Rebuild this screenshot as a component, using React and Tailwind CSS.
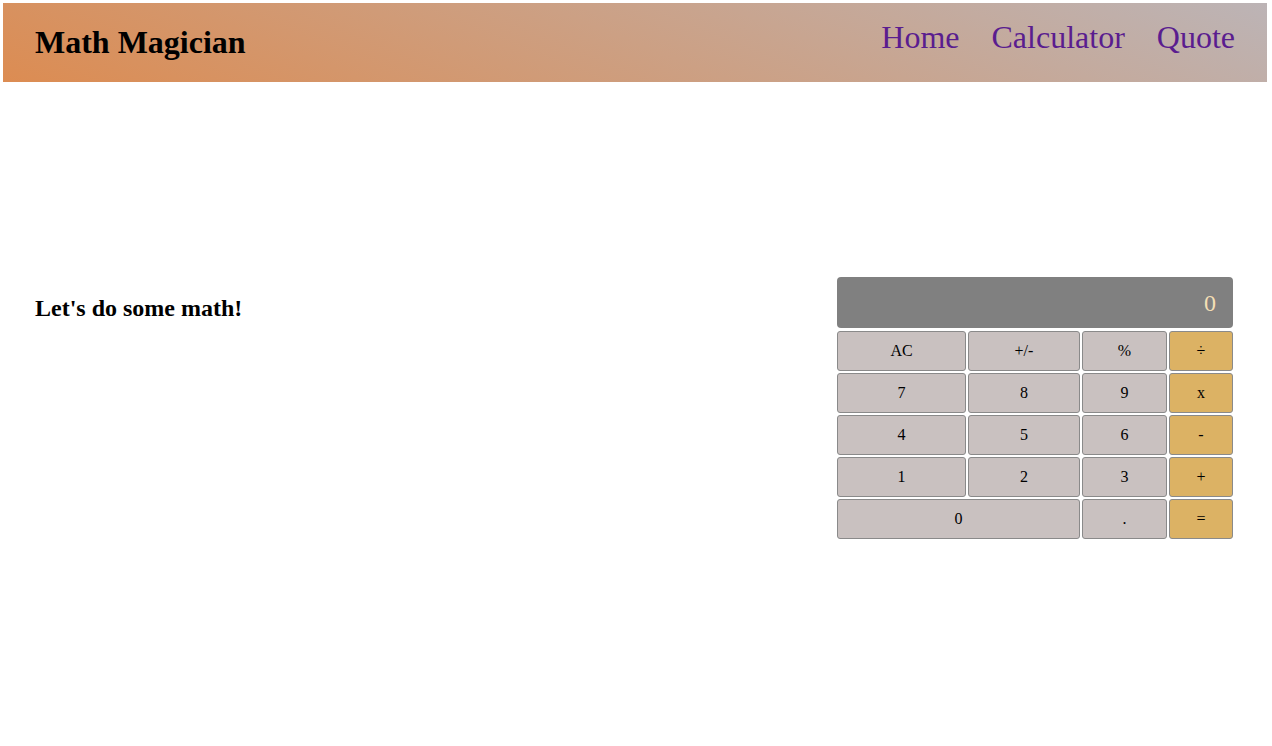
const KEYS = [
  ['AC', '+/-', '%', '÷'],
  ['7', '8', '9', 'x'],
  ['4', '5', '6', '-'],
  ['1', '2', '3', '+'],
  ['0', '.', '='],
]

function Key({ label, op, wide }) {
  return (
    <button
      className={`h-[40px] rounded-[3px] border border-[#8a8a8a] text-[16px] text-black ${
        op ? 'bg-[#dcb264]' : 'bg-[#c9c1c0]'
      } ${wide ? 'col-span-2' : ''}`}
    >
      {label}
    </button>
  )
}

export default function App() {
  return (
    <div className="min-h-[746px] bg-white pt-[3px] pl-[3px] pr-[5px] font-['Liberation_Serif',serif]">
      <header className="flex h-[79px] items-center justify-between bg-[linear-gradient(22deg,#dc8c52,#bcb4b6)] px-[32px]">
        <h1 className="-mt-[2px] text-[32px] font-bold text-black">Math Magician</h1>
        <nav className="-mt-[12px] flex gap-[32px] text-[32px] text-[#5a1d8f]">
          <a href="#">Home</a>
          <a href="#">Calculator</a>
          <a href="#">Quote</a>
        </nav>
      </header>

      <main className="flex justify-between pl-[32px] pr-[34px] pt-[195px]">
        <h2 className="mt-[13px] text-[24px] font-bold text-black">Let's do some math!</h2>

        <div className="w-[396px]">
          <div className="mb-[3px] flex h-[51px] items-center justify-end rounded-[4px] bg-[#808080] pr-[17px] text-[24px] text-[#f3dfb5]">
            0
          </div>
          <div className="grid grid-cols-[129px_112px_85px_64px] gap-[2px]">
            {KEYS.map((row, ri) =>
              row.map((k, ki) => (
                <Key
                  key={`${ri}-${ki}`}
                  label={k}
                  op={ki === row.length - 1}
                  wide={k === '0'}
                />
              ))
            )}
          </div>
        </div>
      </main>
    </div>
  )
}
